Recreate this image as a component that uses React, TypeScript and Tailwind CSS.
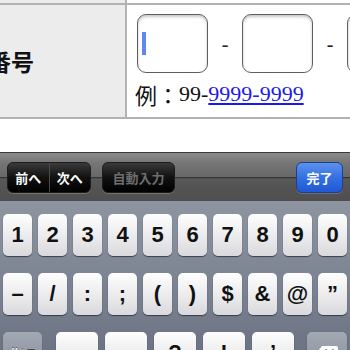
import React from 'react';

const row1 = ['1', '2', '3', '4', '5', '6', '7', '8', '9', '0'];
const row2 = ['–', '/', ':', ';', '(', ')', '$', '&', '@', '”'];
const row3 = ['.', ',', '?', '!', '’'];

const Key = ({ label, w = 'w-[29px]' }: { label: string; w?: string }) => (
  <div
    className={`flex h-[42px] ${w} shrink-0 items-center justify-center rounded-[5px] bg-[linear-gradient(to_bottom,#fefefe,#e9e9eb_60%,#d9d9dd)] text-[22px] font-bold leading-none text-[#111] shadow-[0_1px_1px_rgba(30,34,44,0.7)] font-['Liberation_Sans',sans-serif]`}
  >
    {label}
  </div>
);

const InputBox = ({ focused = false }: { focused?: boolean }) => (
  <div className="flex h-[59px] w-[71px] shrink-0 items-center rounded-[9px] border-[1.5px] border-[#5e5e5e] bg-white pl-[4px] shadow-[inset_0_2px_3px_rgba(0,0,0,0.22)]">
    {focused && <div className="h-[23px] w-[4px] bg-[#5f86f2]" />}
  </div>
);

const Dash = () => (
  <div className="flex w-[34px] shrink-0 justify-center text-[20px] text-[#222] font-['Liberation_Serif',serif]">-</div>
);

export default function App() {
  return (
    <div className="flex h-[350px] w-[350px] flex-col overflow-hidden bg-white">
      {/* table */}
      <div className="flex h-[3px] shrink-0">
        <div className="w-[125px] bg-[#ececec]" />
        <div className="w-[2px] bg-[#b3b3b3]" />
        <div className="flex-1 bg-white" />
      </div>
      <div className="h-[2px] shrink-0 bg-[#b3b3b3]" />
      <div className="flex h-[112px] shrink-0">
        <div className="flex w-[125px] items-center overflow-hidden bg-[#ececec]">
          <span className="ml-[-12px] whitespace-nowrap text-[23px] font-bold leading-none text-[#111] font-['Noto_Sans_CJK_JP',sans-serif]">
            番号
          </span>
        </div>
        <div className="w-[2px] bg-[#b3b3b3]" />
        <div className="flex-1 overflow-hidden pl-[10px] pt-[9px]">
          <div className="flex items-center">
            <InputBox focused />
            <Dash />
            <InputBox />
            <Dash />
            <InputBox />
          </div>
          <div className="mt-[8px] flex whitespace-nowrap text-[22px] leading-[26px] text-[#111]">
            <span className="-ml-[2px] font-['Noto_Sans_CJK_JP',sans-serif]">例：</span>
            <span className="font-['Liberation_Serif',serif]">99-</span>
            <span className="text-[#1a1aee] underline font-['Liberation_Serif',serif]">9999-9999</span>
          </div>
        </div>
      </div>
      <div className="h-[2px] shrink-0 bg-[#b3b3b3]" />
      <div className="h-[33px] shrink-0 bg-white" />

      {/* keyboard toolbar */}
      <div className="flex h-[49px] shrink-0 items-start border-t border-[#3a3a3a] bg-[linear-gradient(to_bottom,#8a8a8a_0%,#767676_20%,#686868_50%,#363636_51%,#585858_54%,#4e4e4e_100%)] px-[7px] pt-[9px]">
        <div className="flex h-[31px] w-[84px] overflow-hidden rounded-[6px] border border-[#1c1c1c] bg-[linear-gradient(to_bottom,#3a3a3a,#111_50%,#000)] text-[13px] font-bold text-white shadow-[0_1px_0_rgba(255,255,255,0.18)] font-['Noto_Sans_CJK_JP',sans-serif]">
          <div className="flex flex-1 items-center justify-center border-r border-[#4a4a4a]">前へ</div>
          <div className="flex flex-1 items-center justify-center">次へ</div>
        </div>
        <div className="ml-[11px] flex h-[31px] w-[73px] items-center justify-center rounded-[6px] border border-[#1c1c1c] bg-[linear-gradient(to_bottom,#3a3a3a,#111_50%,#000)] text-[13px] font-bold text-[#6e6e6e] shadow-[0_1px_0_rgba(255,255,255,0.18)] font-['Noto_Sans_CJK_JP',sans-serif]">
          自動入力
        </div>
        <div className="flex-1" />
        <div className="flex h-[31px] w-[47px] items-center justify-center rounded-[6px] border border-[#1f3f86] bg-[linear-gradient(to_bottom,#5b92ee,#3570e3_50%,#1f58d4)] text-[13px] font-bold text-white shadow-[0_1px_0_rgba(255,255,255,0.18)] font-['Noto_Sans_CJK_JP',sans-serif]">
          完了
        </div>
      </div>

      {/* keyboard */}
      <div className="flex h-[149px] shrink-0 flex-col gap-[17px] overflow-hidden bg-[linear-gradient(to_bottom,#8e95a1,#7a8291_60%,#6c7483)] px-[3px] pt-[13px]">
        <div className="flex shrink-0 gap-[6px]">
          {row1.map((k) => (
            <Key key={k} label={k} />
          ))}
        </div>
        <div className="flex shrink-0 gap-[6px]">
          {row2.map((k) => (
            <Key key={k} label={k} />
          ))}
        </div>
        <div className="flex shrink-0">
          <div className="flex h-[42px] w-[39px] shrink-0 items-center justify-center rounded-[5px] bg-[linear-gradient(to_bottom,#a3a9b3,#858c99)] text-[15px] font-bold text-white shadow-[0_1px_1px_rgba(30,34,44,0.7)] font-['Liberation_Sans',sans-serif] [text-shadow:0_-1px_0_rgba(0,0,0,0.5)]">
            #+=
          </div>
          <div className="ml-[14px] flex gap-[7px]">
            {row3.map((k) => (
              <Key key={k} label={k} w="w-[42px]" />
            ))}
          </div>
          <div className="ml-[13px] flex h-[42px] w-[40px] shrink-0 items-center justify-center rounded-[5px] bg-[linear-gradient(to_bottom,#a3a9b3,#858c99)] shadow-[0_1px_1px_rgba(30,34,44,0.7)]">
            <svg width="24" height="17" viewBox="0 0 24 17">
              <path d="M7 1h14a2 2 0 0 1 2 2v11a2 2 0 0 1-2 2H7L1 8.5Z" fill="#fff" />
              <path d="M11 5l7 7M18 5l-7 7" stroke="#7f8693" strokeWidth="2" strokeLinecap="round" />
            </svg>
          </div>
        </div>
      </div>
    </div>
  );
}
